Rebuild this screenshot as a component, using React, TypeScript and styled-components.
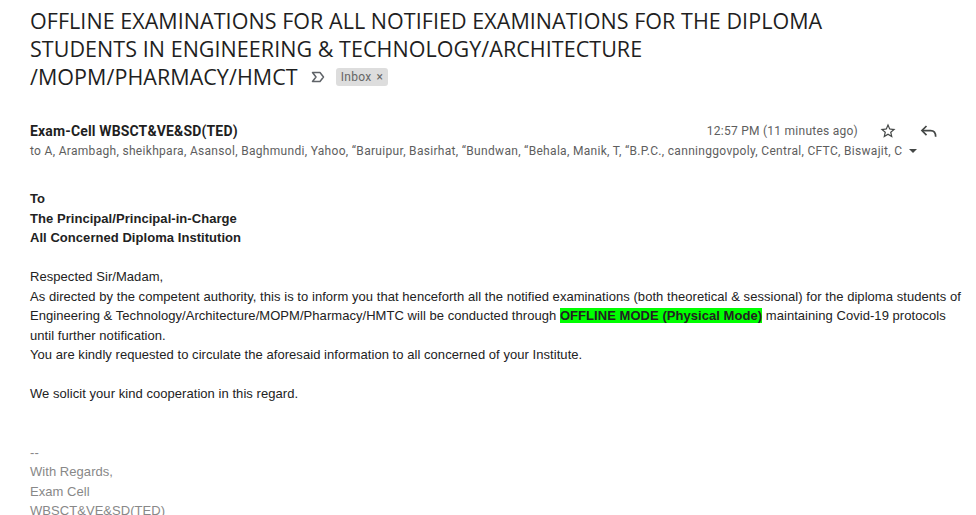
import React from "react";
import styled, { createGlobalStyle } from "styled-components";

const Global = createGlobalStyle`
  html, body { margin: 0; padding: 0; background: #fff; }
  body { font-family: Roboto, "Liberation Sans", Arial, sans-serif; overflow: hidden; }
`;

const Page = styled.div`
  width: 976px;
  height: 515px;
  overflow: hidden;
  padding: 7px 0 0 30px;
  box-sizing: border-box;
`;

const Title = styled.h2`
  margin: 0;
  font-family: "Open Sans", Lato, sans-serif;
  font-weight: 400;
  font-size: 21.5px;
  letter-spacing: 0.05px;
  line-height: 28px;
  color: #1f1f1f;
  width: 830px;
`;

const TitleTail = styled.span`
  display: inline-flex;
  align-items: center;
  gap: 11px;
  margin-left: 13px;
  vertical-align: 2px;
`;

const Chip = styled.span`
  display: inline-flex;
  align-items: center;
  gap: 5px;
  height: 18px;
  padding: 0 5px;
  background: #ddd;
  border-radius: 3px;
  color: #666;
  font-family: Roboto, sans-serif;
  font-size: 12px;
  letter-spacing: 0.3px;
`;

const Header = styled.div`
  display: flex;
  margin-top: 30px;
  padding-right: 37px;
`;

const HeaderLeft = styled.div`
  flex: 1;
  min-width: 0;
`;

const Sender = styled.div`
  font-family: Roboto, sans-serif;
  font-weight: 700;
  font-size: 14px;
  letter-spacing: 0.15px;
  line-height: 20px;
  color: #1f1f1f;
`;

const Recipients = styled.div`
  display: flex;
  align-items: center;
  gap: 6px;
  font-family: Roboto, sans-serif;
  font-size: 12px;
  letter-spacing: 0.31px;
  line-height: 20px;
  color: #5e5e5e;
  white-space: nowrap;
`;

const Actions = styled.div`
  display: flex;
  align-items: center;
  height: 20px;
`;

const Time = styled.span`
  font-family: Roboto, sans-serif;
  font-size: 12px;
  letter-spacing: 0.25px;
  color: #5e5e5e;
  margin-right: 20px;
`;

const IconBtn = styled.span`
  display: inline-flex;
  width: 20px;
  height: 20px;
  align-items: center;
  justify-content: center;
  margin-right: 21px;
  &:last-child { margin-right: 0; }
`;

const Body = styled.div`
  margin-top: 28px;
  font-family: "Liberation Sans", Arial, sans-serif;
  font-size: 13px;
  letter-spacing: 0.05px;
  line-height: 19.5px;
  color: #222;
  padding-right: 10px;
`;

const Para = styled.p`
  margin: 0 0 19.5px;
`;

const Strong = styled.b`
  font-weight: 700;
`;

const Highlight = styled.b`
  background: #00ff00;
  font-weight: 700;
`;

const Signature = styled.div`
  color: #888;
  margin-top: 39px;
`;

const ImportantIcon = () => (
  <svg width="14" height="12" viewBox="0 0 14 12">
    <path d="M1.5 1.5 H9 L12.5 6 L9 10.5 H1.5 L5 6 Z" fill="none" stroke="#5f6368" strokeWidth="1.5" strokeLinejoin="round" />
  </svg>
);

const StarIcon = () => (
  <svg width="18" height="18" viewBox="0 0 24 24">
    <path d="M22 9.24l-7.19-.62L12 2 9.19 8.63 2 9.24l5.46 4.73L5.82 21 12 17.27 18.18 21l-1.63-7.03L22 9.24zM12 15.4l-3.76 2.27 1-4.28-3.32-2.88 4.38-.38L12 6.1l1.71 4.04 4.38.38-3.32 2.88 1 4.28L12 15.4z" fill="#444746" />
  </svg>
);

const ReplyIcon = () => (
  <svg width="20" height="20" viewBox="0 0 24 24">
    <path d="M9 6 L3.5 11.5 L9 17" fill="none" stroke="#444746" strokeWidth="2" />
    <path d="M4 11.5 H14 C18 11.5 20 14 20 19" fill="none" stroke="#444746" strokeWidth="2" />
  </svg>
);

const Caret = () => (
  <svg width="10" height="10" viewBox="0 0 10 10">
    <path d="M1 3 L9 3 L5 7 Z" fill="#444746" />
  </svg>
);

export default function App() {
  return (
    <Page>
      <Global />
      <Title>
        OFFLINE EXAMINATIONS FOR ALL NOTIFIED EXAMINATIONS FOR THE DIPLOMA STUDENTS IN ENGINEERING &amp; TECHNOLOGY/ARCHITECTURE /MOPM/PHARMACY/HMCT
        <TitleTail>
          <ImportantIcon />
          <Chip>Inbox <span>×</span></Chip>
        </TitleTail>
      </Title>
      <Header>
        <HeaderLeft>
          <Sender>Exam-Cell WBSCT&amp;VE&amp;SD(TED)</Sender>
        </HeaderLeft>
        <Actions>
          <Time>12:57 PM (11 minutes ago)</Time>
          <IconBtn><StarIcon /></IconBtn>
          <IconBtn><ReplyIcon /></IconBtn>
        </Actions>
      </Header>
      <Recipients>
        to A, Arambagh, sheikhpara, Asansol, Baghmundi, Yahoo, “Baruipur, Basirhat, “Bundwan, “Behala, Manik, T, “B.P.C., canninggovpoly, Central, CFTC, Biswajit, C
        <Caret />
      </Recipients>
      <Body>
        <Para>
          <Strong>To<br />The Principal/Principal-in-Charge<br />All Concerned Diploma Institution</Strong>
        </Para>
        <div>Respected Sir/Madam,</div>
        <div>
          As directed by the competent authority, this is to inform you that henceforth all the notified examinations (both theoretical &amp; sessional) for the diploma students of Engineering &amp; Technology/Architecture/MOPM/Pharmacy/HMTC will be conducted through <Highlight>OFFLINE MODE (Physical Mode)</Highlight> maintaining Covid-19 protocols until further notification.
        </div>
        <Para>You are kindly requested to circulate the aforesaid information to all concerned of your Institute.</Para>
        <div>We solicit your kind cooperation in this regard.</div>
        <Signature>
          --<br />With Regards,<br />Exam Cell<br />WBSCT&amp;VE&amp;SD(TED)
        </Signature>
      </Body>
    </Page>
  );
}
